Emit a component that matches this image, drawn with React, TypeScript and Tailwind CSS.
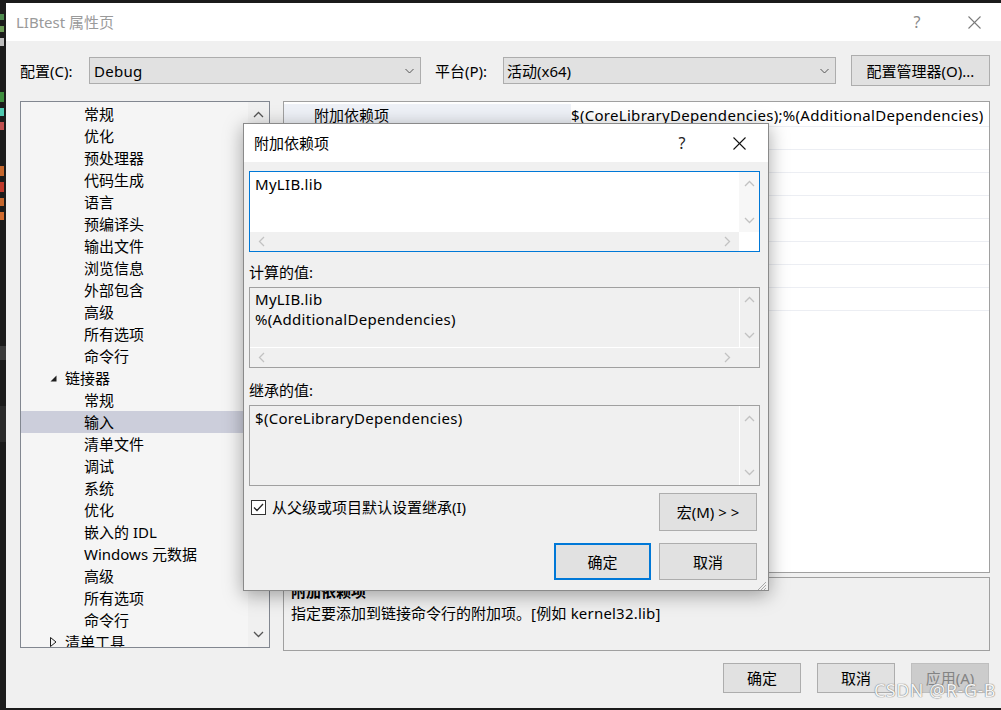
import React from "react";

const Up = ({ c = "#606060" }: { c?: string }) => (
  <svg width="11" height="7" viewBox="0 0 11 7">
    <polyline points="1,6 5.5,1.5 10,6" fill="none" stroke={c} strokeWidth="1.3" />
  </svg>
);
const Down = ({ c = "#606060" }: { c?: string }) => (
  <svg width="11" height="7" viewBox="0 0 11 7">
    <polyline points="1,1 5.5,5.5 10,1" fill="none" stroke={c} strokeWidth="1.3" />
  </svg>
);
const Left = ({ c = "#c2c2c2" }: { c?: string }) => (
  <svg width="7" height="11" viewBox="0 0 7 11">
    <polyline points="6,1 1.5,5.5 6,10" fill="none" stroke={c} strokeWidth="1.3" />
  </svg>
);
const Right = ({ c = "#c2c2c2" }: { c?: string }) => (
  <svg width="7" height="11" viewBox="0 0 7 11">
    <polyline points="1,1 5.5,5.5 1,10" fill="none" stroke={c} strokeWidth="1.3" />
  </svg>
);
const Close = ({ c = "#111", s = 13 }: { c?: string; s?: number }) => (
  <svg width={s} height={s} viewBox="0 0 13 13">
    <line x1="0.5" y1="0.5" x2="12.5" y2="12.5" stroke={c} strokeWidth="1.1" />
    <line x1="12.5" y1="0.5" x2="0.5" y2="12.5" stroke={c} strokeWidth="1.1" />
  </svg>
);

type Item = { t: string; lvl: 0 | 1; exp?: "open" | "closed"; sel?: boolean };
const tree: Item[] = [
  { t: "常规", lvl: 1 },
  { t: "优化", lvl: 1 },
  { t: "预处理器", lvl: 1 },
  { t: "代码生成", lvl: 1 },
  { t: "语言", lvl: 1 },
  { t: "预编译头", lvl: 1 },
  { t: "输出文件", lvl: 1 },
  { t: "浏览信息", lvl: 1 },
  { t: "外部包含", lvl: 1 },
  { t: "高级", lvl: 1 },
  { t: "所有选项", lvl: 1 },
  { t: "命令行", lvl: 1 },
  { t: "链接器", lvl: 0, exp: "open" },
  { t: "常规", lvl: 1 },
  { t: "输入", lvl: 1, sel: true },
  { t: "清单文件", lvl: 1 },
  { t: "调试", lvl: 1 },
  { t: "系统", lvl: 1 },
  { t: "优化", lvl: 1 },
  { t: "嵌入的 IDL", lvl: 1 },
  { t: "Windows 元数据", lvl: 1 },
  { t: "高级", lvl: 1 },
  { t: "所有选项", lvl: 1 },
  { t: "命令行", lvl: 1 },
  { t: "清单工具", lvl: 0, exp: "closed" },
];

const btn =
  "flex items-center justify-center border border-[#adadad] bg-[#e1e1e1] text-[15px] text-black";

export default function App() {
  return (
    <div className="relative flex h-[710px] w-[1001px] overflow-hidden bg-[#1b1b1b] font-['Noto_Sans','Noto_Sans_CJK_SC',sans-serif] text-[15px] leading-[22px] text-black">
      {/* editor sliver behind */}
      <div className="flex w-[6px] shrink-0 flex-col gap-[6px] pt-[14px]">
        <div className="h-[6px] w-[4px] bg-[#4e8a4e]" />
        <div className="h-[6px] w-[4px] bg-[#6a9955]" />
        <div className="h-[8px] w-[4px] bg-[#bdbdbd]" />
        <div className="mt-[40px] h-[10px] w-[4px] bg-[#3f8f3f]" />
        <div className="h-[8px] w-[4px] bg-[#4ec9b0]" />
        <div className="h-[8px] w-[4px] bg-[#c05050]" />
        <div className="mt-[30px] h-[10px] w-[4px] bg-[#c5672e]" />
        <div className="h-[10px] w-[4px] bg-[#c0392b]" />
        <div className="h-[8px] w-[4px] bg-[#c5672e]" />
        <div className="h-[8px] w-[4px] bg-[#d16b2e]" />
        <div className="mt-[120px] h-[14px] w-[6px] bg-[#3a3a3a]" />
        <div className="mt-[40px] h-[36px] w-[6px] bg-[#2a2a2a]" />
      </div>

      {/* main window */}
      <div className="mb-[2px] mt-[3px] flex flex-1 flex-col bg-[#f0f0f0]">
        {/* title bar */}
        <div className="flex h-[38px] shrink-0 items-center bg-white pl-[10px] pr-[4px]">
          <span className="text-[15px] text-[#9a9a9a]">LIBtest 属性页</span>
          <div className="ml-auto flex">
            <div className="mr-[11px] flex w-[46px] items-center justify-center text-[16px] text-[#8a8a8a]">?</div>
            <div className="flex w-[46px] items-center justify-center">
              <Close c="#7a7a7a" s={13} />
            </div>
          </div>
        </div>

        {/* config row */}
        <div className="mt-[14px] flex h-[31px] items-center pl-[14px]">
          <span className="w-[69px]">配置(C):</span>
          <div className="flex h-[27px] w-[332px] items-center border border-[#adadad] bg-[#e1e1e1] pl-[4px] pr-[6px]">
            <span className="tracking-[0.3px]">Debug</span>
            <span className="ml-auto">
              <svg width="9" height="6" viewBox="0 0 9 6">
                <polyline points="0.5,1 4.5,5 8.5,1" fill="none" stroke="#555" strokeWidth="1" />
              </svg>
            </span>
          </div>
          <span className="ml-[14px] w-[68px]">平台(P):</span>
          <div className="flex h-[27px] w-[333px] items-center border border-[#adadad] bg-[#e1e1e1] pl-[3px] pr-[6px]">
            <span>活动(x64)</span>
            <span className="ml-auto">
              <svg width="9" height="6" viewBox="0 0 9 6">
                <polyline points="0.5,1 4.5,5 8.5,1" fill="none" stroke="#555" strokeWidth="1" />
              </svg>
            </span>
          </div>
          <div className={`${btn} ml-[15px] h-[31px] w-[139px]`}>配置管理器(O)...</div>
        </div>

        {/* main area */}
        <div className="mt-[15px] flex pl-[14px]">
          {/* tree */}
          <div className="flex h-[547px] w-[250px] border border-[#828790] bg-[#f5f5f5]">
            <div className="flex-1 overflow-hidden pt-[1px]">
              {tree.map((it, i) => (
                <div
                  key={i}
                  className={`flex h-[22px] items-center ${it.sel ? "bg-[#cccedb]" : ""}`}
                >
                  {it.lvl === 1 ? (
                    <span className="whitespace-nowrap pl-[63px]">{it.t}</span>
                  ) : (
                    <>
                      <span className="flex w-[44px] justify-end pr-[8px]">
                        {it.exp === "open" ? (
                          <svg width="7" height="7" viewBox="0 0 7 7">
                            <polygon points="6.5,0.5 6.5,6.5 0.5,6.5" fill="#1e1e1e" />
                          </svg>
                        ) : (
                          <svg width="7" height="10" viewBox="0 0 7 10">
                            <polygon points="0.5,0.5 6,5 0.5,9.5" fill="none" stroke="#1e1e1e" strokeWidth="1" />
                          </svg>
                        )}
                      </span>
                      <span className="whitespace-nowrap">{it.t}</span>
                    </>
                  )}
                </div>
              ))}
            </div>
            <div className="flex w-[21px] flex-col items-center justify-between bg-[#f0f0f0] py-[9px]">
              <Up c="#555" />
              <Down c="#555" />
            </div>
          </div>

          {/* right column */}
          <div className="ml-[13px] flex w-[707px] flex-col">
            <div className="h-[472px] overflow-hidden border border-[#a0a0a0] bg-white pt-[2px]">
              {Array.from({ length: 9 }).map((_, i) => (
                <div key={i} className="flex h-[23px] border-b border-[#eceef3]">
                  {i === 0 ? (
                    <>
                      <div className="flex w-[287px] shrink-0 items-center bg-[#eef1f7] pl-[30px]">附加依赖项</div>
                      <div className="flex items-center whitespace-nowrap tracking-[0.3px]">
                        $(CoreLibraryDependencies);%(AdditionalDependencies)
                      </div>
                    </>
                  ) : null}
                </div>
              ))}
            </div>
            <div className="mt-[4px] h-[74px] border border-[#a0a0a0] bg-[#f0f0f0] pl-[7px] pt-[2px]">
              <div className="font-bold">附加依赖项</div>
              <div>
                指定要添加到链接命令行的附加项。<span className="tracking-[0.2px]">[例如 kernel32.lib]</span>
              </div>
            </div>
          </div>
        </div>

        {/* bottom buttons */}
        <div className="mt-[12px] flex justify-end gap-[16px] pr-[12px]">
          <div className={`${btn} h-[30px] w-[78px]`}>确定</div>
          <div className={`${btn} h-[30px] w-[78px]`}>取消</div>
          <div className="flex h-[30px] w-[78px] items-center justify-center border border-[#bfbfbf] bg-[#cccccc] text-[#838383]">
            应用(A)
          </div>
        </div>
      </div>

      {/* dialog */}
      <div className="absolute left-[243px] top-[123px] flex h-[468px] w-[526px] flex-col border border-[#8a8a8a] bg-[#f0f0f0] shadow-[0_4px_18px_rgba(0,0,0,0.35)]">
        <div className="flex h-[38px] shrink-0 items-center bg-white pl-[10px] pr-[6px]">
          <span>附加依赖项</span>
          <div className="ml-auto flex">
            <div className="mr-[11px] flex w-[46px] items-center justify-center text-[16px] text-[#222]">?</div>
            <div className="flex w-[46px] items-center justify-center">
              <Close />
            </div>
          </div>
        </div>

        <div className="flex flex-col pl-[5px]">
          {/* box 1 */}
          <div className="mt-[9px] flex h-[81px] w-[511px] flex-col border border-[#0078d7] bg-white">
            <div className="flex flex-1">
              <div className="flex-1 pl-[5px] pt-[1px] tracking-[0.3px]">MyLIB.lib</div>
              <div className="flex w-[20px] flex-col items-center justify-between bg-[#f7f7f7] py-[8px]">
                <Up c="#c2c2c2" />
                <Down c="#c2c2c2" />
              </div>
            </div>
            <div className="flex h-[19px]">
              <div className="flex flex-1 items-center justify-between bg-[#f0f0f0] px-[8px]">
                <Left />
                <Right />
              </div>
              <div className="w-[20px]" />
            </div>
          </div>

          <div className="mt-[10px] h-[20px] leading-[20px]">计算的值:</div>

          {/* box 2 */}
          <div className="mt-[5px] flex h-[81px] w-[511px] flex-col border border-[#a0a0a0] bg-[#f0f0f0]">
            <div className="flex flex-1">
              <div className="flex-1 pl-[5px] pt-[1px] leading-[20px] tracking-[0.3px]">
                <div>MyLIB.lib</div>
                <div>%(AdditionalDependencies)</div>
              </div>
              <div className="flex w-[20px] flex-col items-center justify-between border-l border-white py-[8px]">
                <Up c="#c2c2c2" />
                <Down c="#c2c2c2" />
              </div>
            </div>
            <div className="flex h-[20px] border-t border-white">
              <div className="flex flex-1 items-center justify-between px-[8px]">
                <Left />
                <Right />
              </div>
              <div className="w-[20px]" />
            </div>
          </div>

          <div className="mt-[12px] h-[20px] leading-[20px]">继承的值:</div>

          {/* box 3 */}
          <div className="mt-[5px] flex h-[81px] w-[511px] border border-[#a0a0a0] bg-[#f0f0f0]">
            <div className="flex-1 pl-[5px] pt-[1px] tracking-[0.3px]">$(CoreLibraryDependencies)</div>
            <div className="flex w-[20px] flex-col items-center justify-between border-l border-white py-[9px]">
              <Up c="#c2c2c2" />
              <Down c="#c2c2c2" />
            </div>
          </div>

          {/* checkbox + macro */}
          <div className="mt-[7px] flex w-[508px] items-start">
            <div className="flex items-center gap-[6px] pl-[2px] pt-[3px]">
              <div className="flex h-[15px] w-[15px] items-center justify-center border border-[#333] bg-white">
                <svg width="11" height="9" viewBox="0 0 11 9">
                  <polyline points="1,4.5 4,7.5 10,1" fill="none" stroke="#222" strokeWidth="1.3" />
                </svg>
              </div>
              <span>从父级或项目默认设置继承(I)</span>
            </div>
            <div className={`${btn} ml-auto h-[38px] w-[98px] whitespace-pre`}>宏(M) &gt; &gt;</div>
          </div>

          <div className="mt-[12px] flex w-[508px] justify-end gap-[8px]">
            <div className="flex h-[37px] w-[97px] items-center justify-center border-2 border-[#0078d7] bg-[#e1e1e1]">确定</div>
            <div className={`${btn} h-[37px] w-[98px]`}>取消</div>
          </div>
        </div>

        {/* resize grip */}
        <div className="mt-auto flex justify-end pb-[1px] pr-[1px]">
          <svg width="11" height="11" viewBox="0 0 11 11">
            <line x1="10" y1="2" x2="2" y2="10" stroke="#a8a8a8" strokeWidth="1" />
            <line x1="10" y1="5" x2="5" y2="10" stroke="#a8a8a8" strokeWidth="1" />
            <line x1="10" y1="8" x2="8" y2="10" stroke="#a8a8a8" strokeWidth="1" />
          </svg>
        </div>
      </div>

      {/* watermark */}
      <div className="absolute right-[5px] top-[678px] text-[18px] leading-[24px] tracking-[0.5px] text-[#f4f4f4] [text-shadow:0_0_1px_#777,0_0_1px_#777]">
        CSDN @R-G-B
      </div>
    </div>
  );
}
